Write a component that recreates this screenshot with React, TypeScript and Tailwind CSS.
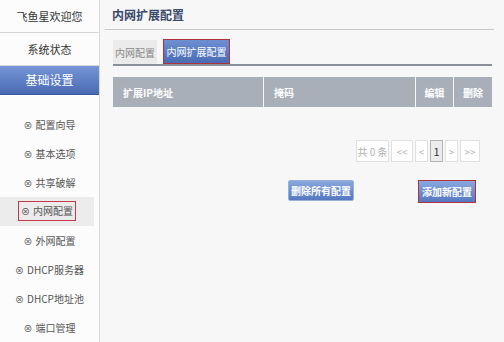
const font = { fontFamily: '"Noto Sans CJK SC", "Liberation Sans", sans-serif' };

const subItems = ["配置向导", "基本选项", "共享破解", "内网配置", "外网配置", "DHCP服务器", "DHCP地址池", "端口管理"];

function Sidebar() {
  return (
    <div className="w-[100px] shrink-0 bg-[#fcfcfc] border-r border-[#d8d8d8] flex flex-col text-[11px] text-[#333]">
      <div className="h-[34px] flex items-center justify-center border-b border-[#d6d6d6]">飞鱼星欢迎您</div>
      <div className="h-[34px] flex items-center justify-center border-b border-[#d6d6d6]">系统状态</div>
      <div className="h-[30px] flex items-center justify-center text-white text-[12px] bg-gradient-to-b from-[#7595d6] to-[#4a6bb3] border-b border-[#3b5a9c]">
        基础设置
      </div>
      <div className="pt-[15px] flex flex-col">
        {subItems.map((s) => {
          const active = s === "内网配置";
          return (
            <div key={s} className={`h-[29px] flex items-center justify-center text-[10px] text-[#555] ${active ? "bg-[#ececec] mr-[5px]" : ""}`}>
              <span className={active ? "border border-[#c23b46] px-[2px] py-[4px] leading-none" : ""}>
                <span className="text-[9px] mr-[3px]">⊗</span>
                {s}
              </span>
            </div>
          );
        })}
      </div>
    </div>
  );
}

function Main() {
  return (
    <div className="flex-1 bg-[#f7f7f7] pl-[5px] pr-[11px] text-[11px]">
      <div className="h-[30px] flex items-center pl-[7px] text-[12px] font-bold text-[#3a4a6a] border-b border-[#c9c9c9]">
        内网扩展配置
      </div>
      <div className="pl-[8px] pr-[2px]">
        <div className="mt-[10px] flex items-end gap-[6px] border-b-2 border-[#8a8f99] h-[26px]">
          <div className="w-[44px] h-[24px] flex items-center justify-center bg-[#ebebeb] text-[#888] text-[10px]">内网配置</div>
          <div className="w-[67px] h-[25px] flex items-center justify-center bg-gradient-to-b from-[#6e8fd2] to-[#4a6cb4] text-white text-[10px] border border-[#b0303c]">
            内网扩展配置
          </div>
        </div>
        <div className="mt-[11px] h-[30px] flex text-white text-[10px] font-bold">
          <div className="w-[150px] bg-[#a9afb9] flex items-center pl-[10px]">扩展IP地址</div>
          <div className="w-[151px] ml-px bg-[#a9afb9] flex items-center pl-[10px]">掩码</div>
          <div className="w-[37px] ml-px bg-[#a9afb9] flex items-center justify-center">编辑</div>
          <div className="w-[38px] ml-px bg-[#a9afb9] flex items-center justify-center">删除</div>
        </div>
        <div className="mt-[33px] flex justify-end pr-[12px] gap-[2px] text-[10px] text-[#b0b0b0]">
          <div className="w-[33px] h-[22px] border border-[#e0e0e0] bg-white flex items-center justify-center">共 0 条</div>
          <div className="w-[22px] h-[22px] border border-[#e0e0e0] bg-white flex items-center justify-center">&lt;&lt;</div>
          <div className="w-[13px] h-[22px] border border-[#e0e0e0] bg-white flex items-center justify-center">&lt;</div>
          <div className="w-[13px] h-[22px] border border-[#b4b4b4] bg-[#ececec] text-[#333] text-[11px] flex items-center justify-center">1</div>
          <div className="w-[13px] h-[22px] border border-[#e0e0e0] bg-white flex items-center justify-center">&gt;</div>
          <div className="w-[20px] h-[22px] border border-[#e0e0e0] bg-white flex items-center justify-center">&gt;&gt;</div>
        </div>
        <div className="mt-[18px] flex">
          <div className="ml-[175px] w-[66px] h-[21px] flex items-center justify-center text-white text-[10px] font-bold rounded-[2px] bg-gradient-to-b from-[#8aa8e0] to-[#5578c0] border border-[#9bb0d8]">
            删除所有配置
          </div>
          <div className="ml-[64px] w-[58px] h-[23px] flex items-center justify-center text-white text-[10px] font-bold bg-gradient-to-b from-[#8aa8e0] to-[#5578c0] border border-[#b0303c]">
            添加新配置
          </div>
        </div>
      </div>
    </div>
  );
}

export default function App() {
  return (
    <div className="w-[504px] h-[342px] flex overflow-hidden bg-[#f7f7f7]" style={font}>
      <Sidebar />
      <Main />
    </div>
  );
}
